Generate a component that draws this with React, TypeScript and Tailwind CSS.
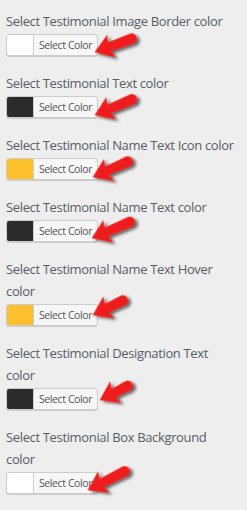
import React from "react";

type Item = { label: string; color: string };

const items: Item[] = [
  { label: "Select Testimonial Image Border color", color: "#ffffff" },
  { label: "Select Testimonial Text color", color: "#2b2b2b" },
  { label: "Select Testimonial Name Text Icon color", color: "#fcc02c" },
  { label: "Select Testimonial Name Text color", color: "#2b2b2b" },
  { label: "Select Testimonial Name Text Hover color", color: "#fcc02c" },
  { label: "Select Testimonial Designation Text color", color: "#2b2b2b" },
  { label: "Select Testimonial Box Background color", color: "#ffffff" },
];

const arrows = [
  { x: 95, y: 52, len: 44, ang: -20 },
  { x: 95, y: 115, len: 45, ang: -23 },
  { x: 93, y: 177, len: 43, ang: -24 },
  { x: 92, y: 238, len: 46, ang: -23 },
  { x: 93, y: 315, len: 38, ang: -26 },
  { x: 100, y: 400, len: 36, ang: -27 },
  { x: 88, y: 490, len: 46, ang: -27 },
];

function Arrow({ x, y, len, ang }: { x: number; y: number; len: number; ang: number }) {
  const r = 5;
  const d = `M0 0 L17 -11.5 L15 -4.2 L${len - r} -${r} A${r} ${r} 0 0 1 ${len - r} ${r} L15 4.2 L17 11.5 Z`;
  return (
    <g transform={`translate(${x} ${y}) rotate(${ang})`}>
      <path d={d} fill="#ee1b1b" filter="url(#shadow)" strokeLinejoin="round" stroke="#ee1b1b" strokeWidth="0.6" />
    </g>
  );
}

export default function App() {
  return (
    <div
      className="relative w-[247px] h-[510px] overflow-hidden bg-[#eeeeee] pl-[6px] pt-[10px]"
      style={{ fontFamily: '"Open Sans", "Noto Sans", sans-serif' }}
    >
      <div className="flex flex-col gap-[16px]">
        {items.map((it, i) => (
          <div key={i} className="flex flex-col">
            <div className="w-[230px] text-[13px] leading-[22px] tracking-[-0.35px] text-[#555d66]">{it.label}</div>
            <div className="mt-[2px] flex h-[22px] w-[92px] overflow-hidden rounded-[3px] border border-[#cccccc] bg-[#f7f7f7] shadow-[0_1px_0_#cccccc]">
              <div className="w-[27px] shrink-0 border-r border-[#cccccc]" style={{ background: it.color }} />
              <div className="flex flex-1 items-center pl-[5px] text-[10.5px] leading-none tracking-[-0.4px] text-[#555555] whitespace-nowrap">
                Select Color
              </div>
            </div>
          </div>
        ))}
      </div>
      <svg className="pointer-events-none absolute left-0 top-0" width="247" height="510" viewBox="0 0 247 510">
        <defs>
          <filter id="shadow" x="-30%" y="-50%" width="160%" height="200%">
            <feDropShadow dx="2" dy="3" stdDeviation="1.6" floodColor="#000" floodOpacity="0.6" />
          </filter>
        </defs>
        {arrows.map((a, i) => (
          <Arrow key={i} {...a} />
        ))}
      </svg>
    </div>
  );
}
